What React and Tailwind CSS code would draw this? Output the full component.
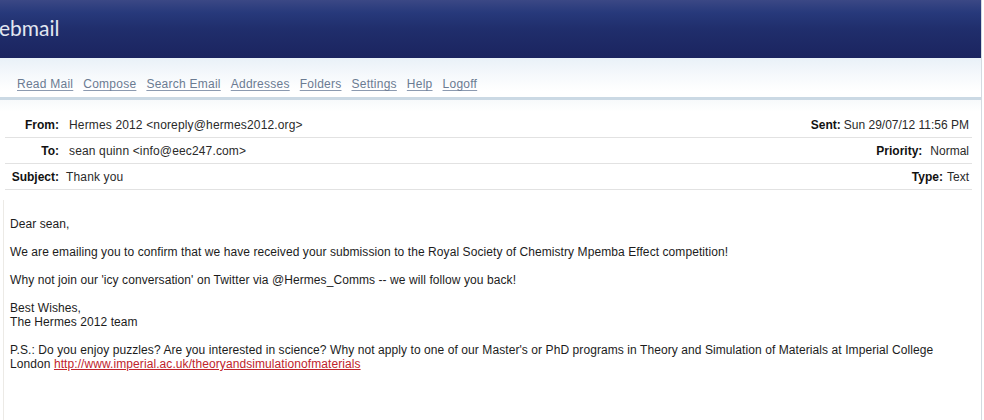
const navLinks = ['Read Mail', 'Compose', 'Search Email', 'Addresses', 'Folders', 'Settings', 'Help', 'Logoff'];

const headerRows = [
  { label: 'From:', value: 'Hermes 2012 <noreply@hermes2012.org>', rLabel: 'Sent:', rValue: 'Sun 29/07/12 11:56 PM', rGap: 'ml-[3px]' },
  { label: 'To:', value: 'sean quinn <info@eec247.com>', rLabel: 'Priority:', rValue: 'Normal', rGap: 'ml-[8px]' },
  { label: 'Subject:', value: 'Thank you', rLabel: 'Type:', rValue: 'Text', rGap: 'ml-[4px]', tight: true },
];

export default function App() {
  return (
    <div className="w-[984px] h-[420px] overflow-hidden bg-white font-['Liberation_Sans',Arial,sans-serif] text-[12px] text-[#1c1c1c]">
      <div className="w-[982px] border-r border-[#d4d9e0]">
        {/* ── Banner ── */}
        <div className="h-[58px] bg-[linear-gradient(to_bottom,#3b4885_0%,#27397b_22%,#202e6c_50%,#1b245f_100%)] pt-[15px]">
          <span className="block font-['Lato',sans-serif] text-[21px] leading-[25px] text-[#e2e7f1] -ml-[1px]">ebmail</span>
        </div>

        {/* ── Navigation ── */}
        <div className="h-[42px] bg-[linear-gradient(to_bottom,#e9f1f8_0%,#f6f9fc_45%,#ffffff_85%)] border-b-[3px] border-[#cbd9e4] flex items-center gap-[10px] pl-[17px] pt-[13px] tracking-[0.25px]">
          {navLinks.map((l) => (
            <a key={l} href="#" className="text-[#6b7b92] underline underline-offset-[2px] decoration-[#8c9ab0]">
              {l}
            </a>
          ))}
        </div>

        {/* ── Message header ── */}
        <div className="bg-[linear-gradient(to_bottom,#f7f9fb,#ffffff_12px)] pt-[12px] px-[5px] pr-[9px]">
          {headerRows.map((r) => (
            <div key={r.label} className="h-[26px] border-b border-[#e2e2e2] flex items-center">
              <span className="w-[54px] text-right font-bold text-[#111]">{r.label}</span>
              <span className={`${r.tight ? 'ml-[7px]' : 'ml-[10px]'} text-[#2a2a2a] flex-1 tracking-[0.15px]`}>{r.value}</span>
              <span className="font-bold text-[#111]">{r.rLabel}</span>
              <span className={`${r.rGap} text-[#2a2a2a] mr-[3px]`}>{r.rValue}</span>
            </div>
          ))}
        </div>

        {/* ── Message body ── */}
        <div className="mt-[10px] ml-[3px] border-l border-[#eceae6] h-[230px] pl-[6px] pr-[26px] pt-[17px] leading-[14px] tracking-[0.08px]">
          <p>Dear sean,</p>
          <p className="mt-[14px]">
            We are emailing you to confirm that we have received your submission to the Royal Society of Chemistry Mpemba Effect competition!
          </p>
          <p className="mt-[14px]">Why not join our 'icy conversation' on Twitter via @Hermes_Comms -- we will follow you back!</p>
          <p className="mt-[14px]">
            Best Wishes,
            <br />
            The Hermes 2012 team
          </p>
          <p className="mt-[14px]">
            P.S.: Do you enjoy puzzles? Are you interested in science? Why not apply to one of our Master's or PhD programs in Theory and Simulation of Materials at Imperial College London{' '}
            <a href="#" className="text-[#c0242c] underline">
              http://www.imperial.ac.uk/theoryandsimulationofmaterials
            </a>
          </p>
        </div>
      </div>
    </div>
  );
}
